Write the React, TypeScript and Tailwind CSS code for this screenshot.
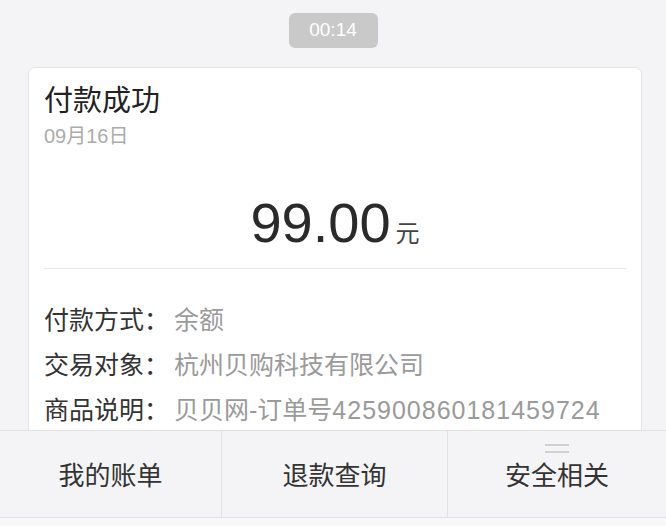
const font = { fontFamily: '"Liberation Sans", "Noto Sans CJK SC", sans-serif' };

function Row({ label, children }: { label: string; children: React.ReactNode }) {
  return (
    <div className="flex h-[45px] items-center text-[25px] leading-[45px]">
      <span className="w-[130px] text-[#333]">{label}：</span>
      <span className="text-[#9a9a9a]">{children}</span>
    </div>
  );
}

export default function App() {
  return (
    <div className="relative h-[526px] w-[666px] overflow-hidden bg-[#f4f4f6]" style={font}>
      <div className="flex justify-center pt-[13px]">
        <div className="flex h-[35px] w-[89px] items-center justify-center rounded-[6px] bg-[#c9c9c9] text-[19px] text-white">
          00:14
        </div>
      </div>

      <div className="ml-[28px] mr-[24px] mt-[19px] h-[500px] rounded-[7px] border border-[#e4e4e4] bg-white px-[15px] pt-[18px]">
        <div className="text-[29px] leading-[30px] text-[#222]">付款成功</div>
        <div className="mt-[9px] text-[20px] leading-[22px] text-[#ababab]">09月16日</div>

        <div className="mt-[48px] flex items-baseline justify-center leading-[56px] text-[#2a2a2a]">
          <span className="text-[56px]">99.00</span>
          <span className="ml-[5px] text-[24px] text-[#444]">元</span>
        </div>

        <div className="mt-[6px] border-t border-[#e8e8e8]" />

        <div className="mt-[29px]">
          <Row label="付款方式">余额</Row>
          <Row label="交易对象">杭州贝购科技有限公司</Row>
          <Row label="商品说明">
            贝贝网-订单号<span className="tracking-[1px]">425900860181459724</span>
          </Row>
        </div>
      </div>

      <div className="absolute left-0 right-0 top-[430px] grid h-[88px] grid-cols-[222px_226px_1fr] border-y border-[#e2e2e4] bg-[#f4f4f6] text-[26px] text-[#333]">
        <div className="flex items-center justify-center border-r border-[#e2e2e4] pt-[4px]">我的账单</div>
        <div className="flex items-center justify-center border-r border-[#e2e2e4] pt-[4px]">退款查询</div>
        <div className="relative flex items-center justify-center pt-[4px]">
          <div className="absolute left-1/2 top-[13px] flex w-[24px] -translate-x-1/2 flex-col gap-[5px]">
            <div className="h-[2px] bg-[#d0d0d2]" />
            <div className="h-[2px] bg-[#d0d0d2]" />
          </div>
          安全相关
        </div>
      </div>
      <div className="absolute bottom-0 left-0 right-0 h-[8px] bg-[#f8f8f8]" />
    </div>
  );
}
